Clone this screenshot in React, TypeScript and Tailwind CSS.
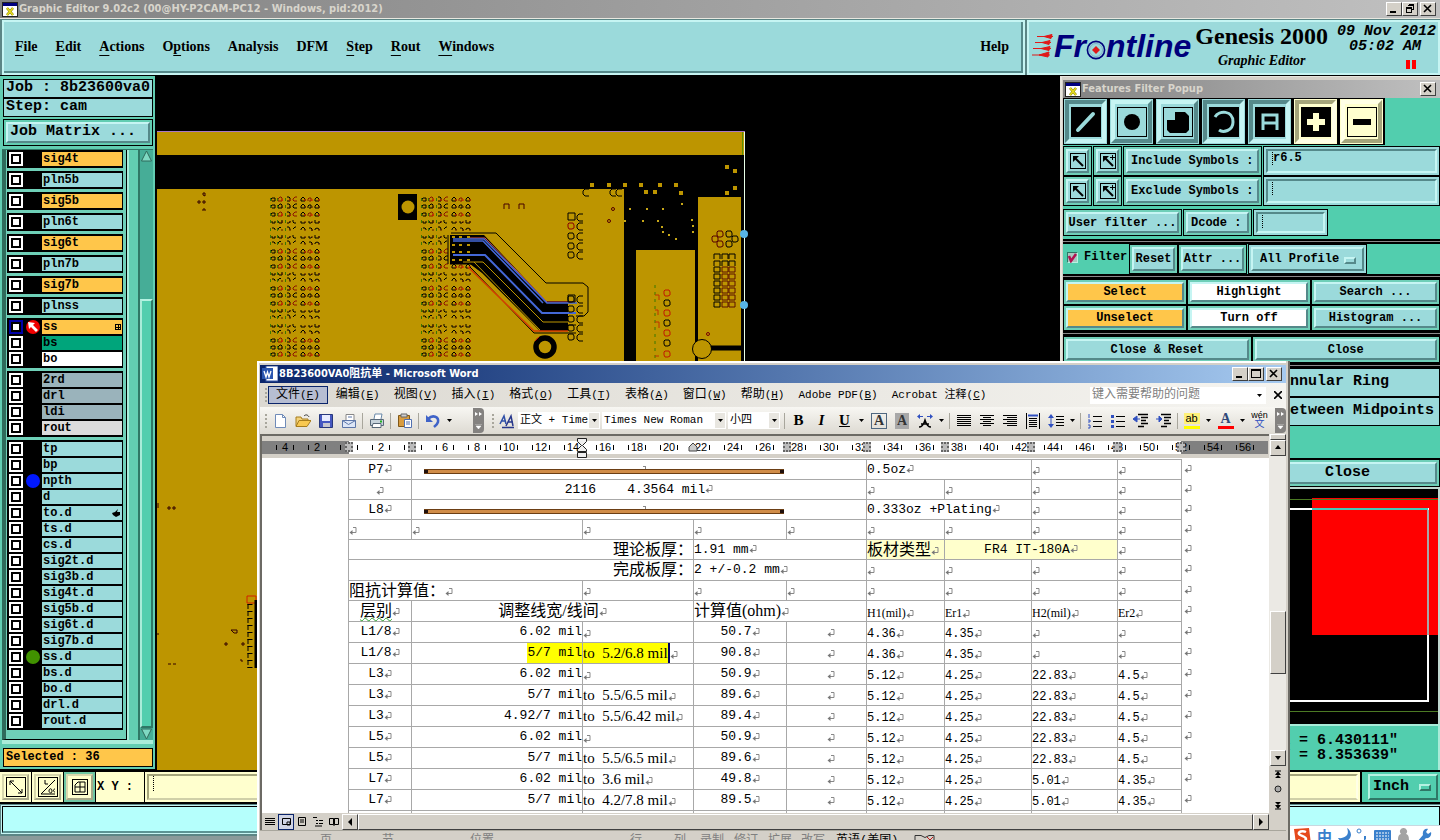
import { Fragment, type ReactNode } from "react";

const MONO = "font-['Liberation_Mono',monospace]";
const SERIF = "font-['Liberation_Serif',serif]";
const TITLE = "font-['DejaVu_Sans_Condensed','Noto_Sans','Noto_Sans_CJK_SC',sans-serif]";
const SONG = "font-['Liberation_Serif','Noto_Sans_CJK_SC',serif]";
const CJK = "font-['Liberation_Mono','Noto_Sans_CJK_SC',monospace]";

// Motif style bevels
const UP = "border-2 border-t-[#c6f5f3] border-l-[#c6f5f3] border-r-[#55898a] border-b-[#55898a]";
const DOWN = "border-2 border-t-[#55898a] border-l-[#55898a] border-r-[#c6f5f3] border-b-[#c6f5f3]";
const WIN_UP = "border border-t-white border-l-white border-r-[#404040] border-b-[#404040] bg-[#d4d0c8]";

function XIcon() {
  return (
    <svg viewBox="0 0 16 15" className="h-[15px] w-4 shrink-0">
      <rect width="16" height="15" fill="#222" />
      <rect x="1" y="1" width="14" height="13" fill="#fff" />
      <rect x="1" y="1" width="14" height="3" fill="#000080" />
      <path d="M5 6l6 7M11 6l-6 7" stroke="#8a8200" strokeWidth="2.6" />
      <path d="M5 6l6 7M11 6l-6 7" stroke="#e8de20" strokeWidth="1.4" />
    </svg>
  );
}

function WinButton({ kind }: { kind: "min" | "max" | "restore" | "close" }) {
  return (
    <button aria-label={kind} className={`${WIN_UP} grid h-[14px] w-4 place-items-center`}>
      <svg viewBox="0 0 12 10" className="h-[10px] w-3" fill="none" stroke="#000" shapeRendering="crispEdges">
        {kind === "min" && <path d="M2 8h6" strokeWidth="2" />}
        {kind === "max" && <path d="M1.5 .5h9v8h-9zM1.5 1.5h9" />}
        {kind === "restore" && <path d="M4.5 .5h5v5h-2M4 1.5h6M2.5 3.5h5v5h-5zM2 4.5h6" />}
        {kind === "close" && <path d="M2 1l7 7M9 1L2 8" strokeWidth="1.6" shapeRendering="auto" />}
      </svg>
    </button>
  );
}

/* ───────────── header ───────────── */

const menus: [string, string, string][] = [
  ["", "F", "ile"],
  ["", "E", "dit"],
  ["", "A", "ctions"],
  ["O", "p", "tions"],
  ["Analysis", "", ""],
  ["DFM", "", ""],
  ["", "S", "tep"],
  ["", "R", "out"],
  ["", "W", "indows"],
];

function Header() {
  return (
    <header>
      <div className="flex h-[18px] items-center bg-linear-to-r from-[#828282] to-[#c0c0c0] pr-1 pl-[2px]">
        <XIcon />
        <h1 className={`${TITLE} ml-px flex-1 text-[11px] font-bold text-[#d8d5cc]`}>
          Graphic Editor 9.02c2 (00@HY-P2CAM-PC12 - Windows, pid:2012)
        </h1>
        <WinButton kind="min" />
        <WinButton kind="restore" />
        <span className="w-[2px]" />
        <WinButton kind="close" />
      </div>
      <div className={`${SERIF} flex h-[58px] border-t border-b border-t-[#e8e8e0] border-b-black bg-[#5b8585]`}>
        <nav className="mt-px ml-[2px] flex min-w-0 flex-1 border-2 border-t-[#c6f5f3] border-r-[#c6f5f3] border-b-[#c6f5f3] border-l-[#c6f5f3] bg-[#9bdadb]">
          <div className="flex flex-1 items-center gap-[18px] border-r-2 border-b-2 border-[#55898a] pr-3 pl-[11px] text-[14px] font-bold text-black">
            {menus.map(([a, u, b]) => (
              <button key={a + u + b}>
                {a}
                <span className="underline underline-offset-4">{u}</span>
                {b}
              </button>
            ))}
            <button className="ml-auto">Help</button>
          </div>
        </nav>
        <div className="mt-px ml-[2px] flex w-[413px] border-2 border-[#c6f5f3] bg-[#9bdadb] pl-[3px]">
          <Logo />
          <div className="ml-1 flex flex-col items-center text-black">
            <span className="text-[24px] leading-[28px] font-bold">Genesis 2000</span>
            <span className="text-[14px] leading-[22px] font-bold italic">Graphic Editor</span>
          </div>
          <div className={`${MONO} ml-auto flex flex-col items-end pt-[2px] pr-[2px] text-[15px] leading-[15px] font-bold text-black italic`}>
            <span>09 Nov 2012</span>
            <span className="pr-[15px]">05:02 AM</span>
            <svg viewBox="0 0 10 9" className="mt-[6px] mr-5 h-[9px] w-[10px] shrink-0">
              <path d="M0 0h4v9H0zM6 0h4v9H6z" fill="#f00" />
            </svg>
          </div>
        </div>
      </div>
    </header>
  );
}

function Logo() {
  return (
    <div className="flex shrink-0 items-center pb-1 text-[#00007c]">
      <svg viewBox="0 0 22 26" className="h-[26px] w-[22px]" stroke="#e01818" fill="#e01818">
        <path d="M5 3.5h16M3 9.5h16M1 15.5h18M0 22h18" strokeWidth="1.2" />
        <path d="M12 3.5l8-2-1 4zM10 9.5l8-2-1 4zM9 15.5l9-2-1 4zM7 22l10-3-1 5z" />
      </svg>
      <span className="font-['Liberation_Sans',sans-serif] text-[32px] leading-8 font-bold italic">Fr</span>
      <svg viewBox="0 0 20 20" className="mt-2 h-5 w-5" fill="none">
        <circle cx="10" cy="10" r="8.6" stroke="#00007c" strokeWidth="1.6" />
        <circle cx="10" cy="10" r="6.5" stroke="#7fb0c8" />
        <path d="M10 6l4 4-4 4-4-4z" fill="#e01818" />
      </svg>
      <span className="font-['Liberation_Sans',sans-serif] text-[32px] leading-8 font-bold italic">ntline</span>
    </div>
  );
}

/* ───────────── layer list ───────────── */

type Layer = { name: string; color: string; mark?: "red" | "blue" | "green"; tail?: "grid" | "hand" };

const CYAN = "bg-[#9bdadb]";
const ORANGE = "bg-[#ffc64a]";
const STEEL = "bg-[#9ab3bb]";

const plain = (names: string): Layer[] => names.split(" ").map((name) => ({ name, color: CYAN }));

const groups: Layer[][] = [
  [{ name: "sig4t", color: ORANGE }],
  plain("pln5b"),
  [{ name: "sig5b", color: ORANGE }],
  plain("pln6t"),
  [{ name: "sig6t", color: ORANGE }],
  plain("pln7b"),
  [{ name: "sig7b", color: ORANGE }],
  plain("plnss"),
  [
    { name: "ss", color: ORANGE, mark: "red", tail: "grid" },
    { name: "bs", color: "bg-[#00a57b]" },
    { name: "bo", color: "bg-white" },
  ],
  [
    { name: "2rd", color: STEEL },
    { name: "drl", color: STEEL },
    { name: "ldi", color: STEEL },
    { name: "rout", color: "bg-[#dcdcdc]" },
  ],
  [
    ...plain("tp bp"),
    { name: "npth", color: CYAN, mark: "blue" },
    ...plain("d"),
    { name: "to.d", color: CYAN, tail: "hand" },
    ...plain("ts.d cs.d sig2t.d sig3b.d sig4t.d sig5b.d sig6t.d sig7b.d"),
    { name: "ss.d", color: CYAN, mark: "green" },
    ...plain("bs.d bo.d drl.d rout.d"),
  ],
];

function LayerRow({ layer }: { layer: Layer }) {
  const box = layer.mark === "red" ? "border-[#0000a8] bg-white" : "border-white bg-white";
  return (
    <label className="flex h-4 items-center gap-px pl-px text-black">
      <input type="checkbox" className={`${box} size-[14px] appearance-none border-2 outline-2 -outline-offset-4 outline-black`} />
      <span className="grid w-[17px] place-items-center">
        {layer.mark === "blue" && <span className="size-[14px] rounded-full bg-[#0018ff]" />}
        {layer.mark === "green" && <span className="size-[14px] rounded-full bg-[#419200]" />}
        {layer.mark === "red" && (
          <svg viewBox="0 0 14 14" className="size-[14px]">
            <circle cx="7" cy="7" r="7" fill="#f00000" />
            <path d="M2 2l7 1-2 2 5 5-2 2-5-5-2 2z" fill="#fff" />
          </svg>
        )}
      </span>
      <span className={`${layer.color} flex h-[14px] flex-1 items-center pl-px leading-[14px]`}>
        <span className="flex-1">{layer.name}</span>
        {layer.tail === "grid" && (
          <svg viewBox="0 0 6 6" className="mr-px size-[6px]" shapeRendering="crispEdges">
            <path d="M.5 .5h5v5h-5zM3 0v6M0 3h6" fill="none" stroke="#000" />
          </svg>
        )}
        {layer.tail === "hand" && (
          <svg viewBox="0 0 8 8" className="mr-[2px] size-2">
            <path d="M0 4l3-1 3-3-1 3h3v3L4 8 1 6z" />
          </svg>
        )}
      </span>
    </label>
  );
}

function Sidebar() {
  return (
    <aside className={`${MONO} flex w-[157px] shrink-0 flex-col border-r-2 border-b border-black bg-[#62cdb2] pt-[3px] pr-[2px] pl-[3px] font-bold text-black`}>
      <p className={`${CYAN} h-[19px] truncate border border-black pl-[2px] text-[15px] leading-[16px]`}>Job : 8b23600va0</p>
      <p className={`${CYAN} h-[19px] border border-black pl-[2px] text-[15px] leading-[16px]`}>Step: cam</p>
      <div className="mt-[2px] h-[27px] border border-black p-[2px]">
        <button className={`${UP} ${CYAN} flex h-full w-full items-center pl-[2px] text-[15px]`}>Job Matrix ...</button>
      </div>
      <div className="mt-[3px] -ml-px flex min-h-0 flex-1 border-t border-b-4 border-t-[#2f7766] border-b-[#a9ecd9]">
        <div className="flex w-[125px] flex-col gap-[3px] overflow-hidden border-r border-b border-l-4 border-r-black border-b-black border-l-[#2f6b5c] bg-[#6fd0b8] pr-[3px] pl-px text-[12px]">
          {groups.map((g) => (
            <div key={g[0].name} className="border border-black bg-black">
              {g.map((l) => (
                <LayerRow key={l.name} layer={l} />
              ))}
            </div>
          ))}
        </div>
        <div className="flex-1 border-r-2 border-l-2 border-r-[#2f7766] border-l-[#a9ecd9] bg-[#62cdb2]" />
        <div className="flex w-[13px] flex-col bg-[#46ad97]">
          <svg viewBox="0 0 13 12" className="h-3 w-[13px]">
            <path d="M6.5 1l5 10h-10z" fill="#7fd9c3" stroke="#2f6b5c" />
          </svg>
          <div className="h-[137px]" />
          <div className="flex-1 border-2 border-t-[#b5f2e2] border-r-[#2f7766] border-b-[#2f7766] border-l-[#a9ecd9] bg-[#52ceae]" />
          <svg viewBox="0 0 13 12" className="h-3 w-[13px]">
            <path d="M6.5 11l-5-10h10z" fill="#7fd9c3" stroke="#2f6b5c" />
          </svg>
        </div>
      </div>
      <p className={`${ORANGE} mt-1 mb-[2px] h-[19px] border border-black pl-[2px] text-[12px] leading-[17px]`}>Selected : 36</p>
    </aside>
  );
}

/* ───────────── board canvas ───────────── */

// f: whole pad, u: open at the top, n: open at the bottom
const padRows = "fffununfffunfffununfff";
const padShapes: Record<string, string[]> = {
  f: ["M-1 2h3v-3h-3l-1 1v2", "M-2 2v-2l2-2h1l1 1v3z", "M-1-2h2l1 1v3h-3", "M2-2h-2l-2 2v1l1 1h3", "M-2 2v-2l2-2 2 2v2z", "M-1 2h2v-3h-2l-1 1v2", "M-2 2v-2l2-2 2 2v2z"],
  u: ["M-1 0v2h3v-2", "M-2 0l1 2h3v-3", "M-1 2h2l1-1v-1", "M-2-1v2l1 1h2", "M-2 0v2h4v-1", "M-1 0v2h2l1-1", "M-2-1v3h4v-2"],
  n: ["M-1-1h2l1 1v1", "M-2 1v-1l2-2 1 1", "M-1-2h2l1 2v1", "M1-2h-1l-2 2", "M-2 1v-1l2-2 2 2v1", "M-1-1h2l1 1v2", "M-2 1v-1l2-1 2 1v1"],
};

function PadField({ x, y }: { x: number; y: number }) {
  return (
    <g fill="none">
      {padRows.split("").flatMap((kind, r) =>
        padShapes[kind].map((d, c) => {
          const red = kind === "f" && padRows[r - 1] + padRows[r + 1] !== "ff";
          return (
            <g key={`${r}-${c}`} transform={`translate(${x + Math.round(c * 7.4)} ${y + Math.round(r * 7.4)})`}>
              <path d={d} stroke={red && c % 2 ? "#8a1400" : "#000"} />
              {c < 3 && <path d="M-2.500-1v3" stroke="#3b7800" />}
              {c !== 3 && c !== 0 && <path d="M2 0v2" stroke={red ? "#e01000" : "#5a1800"} />}
            </g>
          );
        }),
      )}
    </g>
  );
}

function Ring({ x, y, color = "#000", gap = false }: { x: number; y: number; color?: string; gap?: boolean }) {
  return <path d={gap ? `M${x + 3} ${y - 3}h-4l-2 2v3l2 2h4` : `M${x - 2} ${y - 3}h4l1 2v3l-2 1h-3l-1-2v-3z`} fill="none" stroke={color} />;
}

const goldSpecks = [
  [590, 184], [607, 184], [623, 184], [639, 184], [658, 184], [674, 184], [644, 191], [653, 191], [679, 192],
  [725, 166], [733, 170], [733, 187], [725, 192],
];
const goldDots = [
  [630, 208], [647, 208], [663, 208], [682, 203], [625, 220], [643, 220], [658, 220], [662, 226],
  [663, 231], [669, 234], [676, 238], [692, 219], [693, 225], [693, 231],
];

function Board() {
  return (
    <div className="min-w-0 flex-1 overflow-hidden bg-black">
      <svg className="h-full w-full" role="img" aria-label="PCB layer view">
        <g transform="translate(-157 -76)">
          <path d="M157 132h587v23H157zM157 189h467v600H157zM636 250h59v540h-59zM698 197h43v590h-43z" fill="#bd9500" />
          <path d="M157 131.5h588" stroke="#a878c8" />
          <path d="M744.5 132v640" stroke="#e8ffe8" />
          <path d="M742.5 132v23" stroke="#5a9000" />
          {goldSpecks.map(([x, y]) => (
            <rect key={`${x}-${y}`} x={x} y={y - 1} width="4" height="4" fill="#bd9500" />
          ))}
          {goldDots.map(([x, y]) => (
            <rect key={`${x}-${y}`} x={x - 1} y={y} width="2" height="2" fill="#c8a818" />
          ))}

          <PadField x={273} y={199} />
          <PadField x={424} y={199} />

          <rect x="398" y="194" width="19" height="26" />
          <circle cx="408" cy="207" r="6.5" fill="#bd9500" />
          <path d="M504 209v-5h5v5M519 209v-5h5v5" fill="none" stroke="#400" />
          <path d="M568 213h7v7h-7z" fill="none" stroke="#000" />
          <Ring x={580} y={217} gap />
          {[226, 236, 246, 255].map((y, i) => (
            <Fragment key={y}>
              <Ring x={571} y={y} color={i ? "#000" : "#800"} />
              <Ring x={580} y={y} gap />
            </Fragment>
          ))}
          <Ring x={586} y={192} gap />
          <Ring x={613} y={192} gap />
          <Ring x={619} y={192} gap />
          <circle cx="613" cy="209" r="1.5" fill="none" stroke="#500" />
          <circle cx="609" cy="221" r="1.5" fill="none" stroke="#500" />

          {/* routed differential pairs */}
          <path d="M450 235h34l62 66h22v30h-28l-58-58-12-9h-20z" />
          <path d="M451 233h45l50 50h37l5 4v25l-4 4h-8" fill="none" stroke="#000" />
          <path d="M448 235v29M450 264h25l61 61h40" fill="none" stroke="#000" />
          <path d="M470 267l64 66h42" fill="none" stroke="#000" />
          <path d="M468 267l66 64h34" fill="none" stroke="#d43c00" strokeWidth="1.5" />
          <path d="M463 262h20l60 60h25M474 262l66 68" fill="none" stroke="#bd9500" />
          <path d="M470 238h15l62 64h28" fill="none" stroke="#d8504a" />
          <path d="M453 239h31l63 64h30M453 241h30l60 62" fill="none" stroke="#4468d8" strokeWidth="1.5" />
          <path d="M453 255h32l57 58h34" fill="none" stroke="#4468d8" strokeWidth="2" />
          {[236, 244, 251, 259].map((y) => (
            <path key={y} d={`M452 ${y}h3v2h-3zM459 ${y}h3v2h-3zM467 ${y}h3v2h-3z`} fill="#bd9500" />
          ))}
          <path d="M568 295h7v7h-7z" fill="none" stroke="#000" />
          {[299, 309, 319, 328, 337].map((y) => (
            <Fragment key={y}>
              <Ring x={571} y={y} />
              <Ring x={580} y={y} gap />
            </Fragment>
          ))}
          <circle cx="545" cy="347" r="9" fill="none" stroke="#000" strokeWidth="5.5" />
          <path d="M535 341l4-4" stroke="#c82000" />

          {/* connector on the right edge */}
          {[293, 303, 313, 323, 333, 343, 354].map((y, i) => (
            <Ring key={y} x={667} y={y} color={i % 2 ? "#000" : "#c01800"} />
          ))}
          <path d="M655 285v75" stroke="#3b7800" strokeDasharray="3 4" />
          <path d="M655 295h4v5M655 310h3v5M655 322h4v6M655 356h4" fill="none" stroke="#c03000" />
          {[234, 239, 244].map((y) => (
            <Fragment key={y}>
              <Ring x={y === 239 ? 715 : 720} y={y} color="#500" />
              <Ring x={y === 239 ? 735 : 729} y={y} />
            </Fragment>
          ))}
          {[256, 263, 270, 277, 284, 291, 298, 305].map((y, r) => (
            <Fragment key={y}>
              {[717, 725, 732].map((x) => (
                <path
                  key={x}
                  d={r < 2 ? `M${x - 3} ${y + 3}v-5h6v5` : `M${x - 3} ${y + 2}v-5h6v5z`}
                  fill="none"
                  stroke={r > 1 && x > 720 ? "#5a1000" : "#000"}
                />
              ))}
            </Fragment>
          ))}
          <path d="M702 348h39" stroke="#000" strokeWidth="5" />
          <circle cx="702" cy="349" r="9.5" fill="#bd9500" stroke="#000" />
          <circle cx="708" cy="334" r="1.5" fill="none" stroke="#700" />
          <circle cx="744" cy="234" r="4" fill="#58b4e4" />
          <circle cx="744" cy="305" r="4" fill="#58b4e4" />

          {/* strip left of the document window */}
          <g fill="none" stroke="#300">
            <path d="M203 195v-2h2v3zM198 203v-2h2v2zM203 203v-2h2v2zM203 211v-2h2v2" />
            <path d="M168 509v-2h2v2zM173 509v-2h2v2zM158 508v-5M168 664h3M173 664h3M158 633v2" />
            <path d="M231 630h6v3h-3zM225 645v-2h2v2zM242 645v-2h2v2zM240 660h2v2" />
            <path d="M247 596h9v7h-9z" stroke="#d02000" />
          </g>
          <path d="M256 600v68" stroke="#000" strokeWidth="3" />
          <path d="M250 604v64" stroke="#000" strokeWidth="5" strokeDasharray="1 6" />
          <path d="M248 604v64" stroke="#000" strokeDasharray="5 2" />
        </g>
      </svg>
    </div>
  );
}

/* ───────────── features filter popup ───────────── */

const CELL = "border border-black bg-[#6fcfb8] p-[2px]";

function PushButton({ children, face = CYAN, grow = "flex-1", pad = "justify-center" }: { children: ReactNode; face?: string; grow?: string; pad?: string }) {
  return (
    <div className={`${CELL} ${grow}`}>
      <button className={`${UP} ${face} ${pad} flex h-full w-full items-center whitespace-nowrap`}>{children}</button>
    </div>
  );
}

function ShapeButton({ name, pressed, cream, children }: { name: string; pressed?: boolean; cream?: boolean; children: ReactNode }) {
  const face = cream ? "bg-[#ffffce]" : "bg-[#9bdadb]";
  const bevel = cream
    ? pressed
      ? "border-t-[#a5a57b] border-l-[#a5a57b] border-r-[#ffffe6] border-b-[#ffffe6]"
      : "border-t-[#ffffe6] border-l-[#ffffe6] border-r-[#a5a57b] border-b-[#a5a57b]"
    : pressed
      ? "border-t-[#55898a] border-l-[#55898a] border-r-[#c6f5f3] border-b-[#c6f5f3]"
      : "border-t-[#c6f5f3] border-l-[#c6f5f3] border-r-[#55898a] border-b-[#55898a]";
  const ink = cream ? "text-[#ffffce]" : "text-[#9bdadb]";
  return (
    <div className={`${face} border border-r-2 border-black p-px`}>
      <button aria-label={name} aria-pressed={!!pressed} className={`${bevel} ${face} ${ink} grid h-[43px] w-[41px] place-items-center border-4`}>
        <svg viewBox="0 0 30 30" className="size-[30px]">
          {pressed ? <rect width="30" height="30" fill="#000" /> : <rect x=".5" y=".5" width="29" height="29" fill="none" stroke="#000" />}
          {children}
        </svg>
      </button>
    </div>
  );
}

function PickButton({ plus }: { plus?: boolean }) {
  return (
    <div className={`${CELL} w-[29px]`}>
      <button aria-label={plus ? "Add symbol" : "Pick symbol"} className={`${UP} ${CYAN} grid h-full w-full place-items-center`}>
        <svg viewBox="0 0 16 16" className="size-4" fill="none" stroke="#000">
          <rect x=".5" y=".5" width="15" height="15" />
          <path d="M5 5l8 8" strokeWidth="2" />
          <path d="M3 3h6L3 9z" fill="#000" stroke="none" />
          {plus && <path d="M12.5 2v5M10 4.500h5" />}
        </svg>
      </button>
    </div>
  );
}

function Field({ label, value, grow }: { label: string; value?: string; grow: string }) {
  return (
    <div className={`${grow} ${CYAN} border border-black p-[2px]`}>
      <div className={`${DOWN} flex h-full items-start pt-px pl-1`}>
        <span className="h-[13px] border-l border-dotted border-black" />
        <input aria-label={label} defaultValue={value} className="h-[13px] w-full min-w-0 bg-transparent leading-[13px] outline-none" />
      </div>
    </div>
  );
}

function Rule() {
  return <div className="h-[5px] border-y-2 border-black bg-[#8a8a8a]" />;
}

function FilterPopup() {
  return (
    <section className={`${MONO} border-t border-l-2 border-[#e6e4dc] bg-[#d4d0c8] pt-[3px] pl-px text-[12px] font-bold text-black`}>
      <div className="flex h-[18px] items-center bg-linear-to-r from-[#828282] to-[#c0c0c0] pr-1 pl-[2px]">
        <XIcon />
        <h2 className={`${TITLE} ml-px flex-1 text-[11px] text-[#d8d5cc]`}>Features Filter Popup</h2>
        <WinButton kind="close" />
      </div>
      <div className="bg-[#52ceae]">
        <div className="flex pb-px">
          <ShapeButton name="Lines" pressed>
            <path d="M7 23L22 7" stroke="currentColor" strokeWidth="4" strokeLinecap="round" />
          </ShapeButton>
          <ShapeButton name="Pads">
            <circle cx="15" cy="15" r="8" fill="#000" />
          </ShapeButton>
          <ShapeButton name="Surfaces">
            <path d="M12 5h10l4 4v14l-3 3H7l-3-3V13h8z" fill="#000" />
          </ShapeButton>
          <ShapeButton name="Arcs" pressed>
            <path d="M6 10c4-7 18-7 18 5 0 9-10 11-14 8" fill="none" stroke="currentColor" strokeWidth="3" />
          </ShapeButton>
          <ShapeButton name="Text" pressed>
            <path d="M8 23V8h14v15M8 16h14" fill="none" stroke="currentColor" strokeWidth="3" />
          </ShapeButton>
          <ShapeButton name="Positive" pressed cream>
            <path d="M15 6v18M6 15h18" stroke="currentColor" strokeWidth="6" />
          </ShapeButton>
          <ShapeButton name="Negative" cream>
            <path d="M6 15h18" stroke="#000" strokeWidth="6" />
          </ShapeButton>
        </div>
        {["Include", "Exclude"].map((kind) => (
          <div key={kind} className="flex h-[30px] gap-px">
            <PickButton />
            <PickButton plus />
            <PushButton grow="w-[139px]" pad="pl-[3px]">{kind} Symbols :</PushButton>
            <Field label={`${kind} symbols`} value={kind === "Include" ? "r6.5" : ""} grow="flex-1" />
          </div>
        ))}
        <div className="mt-[3px] mb-[3px] flex h-[27px] gap-px">
          <PushButton grow="w-[119px]">User filter ...</PushButton>
          <PushButton grow="w-[69px]" pad="pl-[3px]">Dcode :</PushButton>
          <Field label="Dcode" grow="w-[75px]" />
        </div>
        <Rule />
        <div className="flex h-[30px]">
          <label className="flex w-[66px] items-center gap-[6px] pb-1 pl-1">
            <span className="relative grid size-[11px] shrink-0">
              <input type="checkbox" defaultChecked className="peer size-[11px] appearance-none border border-t-[#2f7766] border-r-[#b5f2e2] border-b-[#b5f2e2] border-l-[#2f7766] bg-[#a8c8c0]" />
              <svg viewBox="0 0 11 11" className="pointer-events-none absolute inset-0">
                <path d="M2 4l2 5 5-7" fill="none" stroke="#b01050" strokeWidth="2.5" />
              </svg>
            </span>
            Filter
          </label>
          <PushButton grow="w-[49px]">Reset</PushButton>
          <PushButton grow="w-[69px]">Attr ...</PushButton>
          <div className={`${CYAN} ml-px w-[119px] border border-black p-[2px]`}>
            <div className={`${UP} relative h-full`}>
              <select aria-label="Profile" className="block h-full w-full appearance-none pl-[7px] outline-none">
                <option>All Profile</option>
              </select>
              <span className={`${UP} pointer-events-none absolute top-[8px] right-[6px] h-[7px] w-3`} />
            </div>
          </div>
        </div>
        <Rule />
        <div className="grid grid-cols-[124px_124px_1fr]">
          {[
            ["Select", ORANGE],
            ["Highlight", "bg-white"],
            ["Search ...", CYAN],
            ["Unselect", ORANGE],
            ["Turn off", "bg-white"],
            ["Histogram ...", CYAN],
          ].map(([text, face]) => (
            <div key={text} className="flex h-[26px]">
              <PushButton face={face}>{text}</PushButton>
            </div>
          ))}
        </div>
        <Rule />
        <div className="flex h-[27px]">
          <PushButton>Close &amp; Reset</PushButton>
          <PushButton>Close</PushButton>
        </div>
      </div>
    </section>
  );
}

function RightColumn() {
  return (
    <div className="flex w-[380px] shrink-0 flex-col">
      <FilterPopup />
      <section className={`${MONO} bg-[#52ceae] text-[15px] font-bold text-black`}>
        <div className="h-[5px] border-y-2 border-black bg-[#8a8a8a]" />
        <button className={`${CYAN} block h-[29px] w-full border border-black pl-[220px] text-left`}>Annular Ring</button>
        <button className={`${CYAN} block h-[29px] w-full border border-black pr-[5px] text-right`}>Between Midpoints</button>
        <div className="mt-8 flex h-[29px] border-t border-black">
          <div className={`${CELL} flex-1`} />
          <PushButton grow="w-[185px]">Close</PushButton>
        </div>
      </section>
      <div className="min-h-0 flex-1 border-t-2 border-r-2 border-[#c0d8d0] bg-black">
        <svg className="h-full w-full" role="img" aria-label="Job overview">
          <g transform="translate(-1060 -489)" fill="none">
            <path d="M1312 498h128v137h-128z" fill="#f00" />
            <path d="M1060 499.5h380M1060 711.5h380" stroke="#4c7a24" />
            <path d="M1290 509h138v192h-138" stroke="#fff" strokeWidth="2" />
            <path d="M1312 509h116" stroke="#48c8b8" strokeWidth="2" />
            <path d="M1428 510v125" stroke="#a8a8a8" strokeWidth="2" />
          </g>
        </svg>
      </div>
      <div className={`${MONO} h-[46px] border-t-2 border-r-2 border-[#a9ecd9] bg-[#52ceae] pt-[7px] pl-[221px] text-[15px] leading-[15px] font-bold text-black`}>
        <p className="whitespace-pre">X = 6.430111"</p>
        <p className="whitespace-pre">Y = 8.353639"</p>
      </div>
    </div>
  );
}

/* ───────────── bottom rows ───────────── */

function ToolCell({ name, teal, children }: { name: string; teal?: boolean; children: ReactNode }) {
  return (
    <div className={`${teal ? "bg-[#6fc6a4]" : "bg-[#ffffce]"} border-r border-black p-[2px]`}>
      <button aria-label={name} className="grid h-[26px] w-[27px] place-items-center border-2 border-t-[#d8d8ae] border-r-[#a8a888] border-b-[#a8a888] border-l-[#d8d8ae] bg-[#ffffce]">
        <svg viewBox="0 0 20 20" className="size-5" fill="none" stroke="#000">
          {children}
        </svg>
      </button>
    </div>
  );
}

function CoordinateBar() {
  return (
    <div className={`${MONO} flex h-[34px] border-y-2 border-black bg-[#ffffce] font-bold text-black`}>
      <ToolCell name="Measure">
        <rect x=".5" y=".5" width="19" height="19" />
        <path d="M4 4l12 12M4 8V4h4M16 12v4h-4" />
      </ToolCell>
      <ToolCell name="Angle">
        <rect x=".5" y=".5" width="19" height="19" />
        <path d="M3 17L17 3M3 17h14M7 3v4h3M11 14c0-3 3-3 3 0s-3 2-3 0M17 12c-2 0-2 3 0 3" />
      </ToolCell>
      <ToolCell name="Grid" teal>
        <rect x="2.5" y="2.5" width="15" height="15" />
        <path d="M5 15V8l3-3h7v10zM10 5v10M5 10h10" />
      </ToolCell>
      <label htmlFor="xy" className="flex w-12 items-center pl-px text-[12px] whitespace-pre">
        X Y :
      </label>
      <div className="flex min-w-0 flex-1 border-l border-black p-[2px]">
        <div className="flex w-full items-start border-2 border-t-[#a5a57b] border-r-[#ffffe6] border-b-[#d0d0a8] border-l-[#a5a57b] pl-1">
          <span className="h-[15px] border-l border-dotted border-black" />
          <input id="xy" className="w-full bg-transparent outline-none" />
        </div>
      </div>
      <div className="w-[80px] border-l-2 border-black bg-[#52ceae] p-[2px] pl-[6px]">
        <div className="relative h-full border-2 border-t-[#b5f2e2] border-r-[#2f7766] border-b-[#2f7766] border-l-[#b5f2e2]">
          <select aria-label="Units" className="block h-full w-full appearance-none pl-[3px] text-[15px] outline-none">
            <option>Inch</option>
          </select>
          <span className="pointer-events-none absolute top-[8px] right-[5px] h-[7px] w-3 border-2 border-t-[#b5f2e2] border-r-[#2f7766] border-b-[#2f7766] border-l-[#b5f2e2]" />
        </div>
      </div>
    </div>
  );
}

function ImeBar() {
  return (
    <div className="absolute right-0 bottom-0 flex h-[15px] w-[150px] items-start gap-[6px] overflow-hidden border-t border-[#c8d8e0] bg-white pt-px pl-[3px] text-[#3a80cc]">
      <svg viewBox="0 0 18 18" className="size-[18px] shrink-0">
        <path d="M1 2l15-1 2 16H3z" fill="#e64a1c" />
        <path d="M13 5c-4-2-8 0-7 2s7 2 7 5-5 3-8 1" fill="none" stroke="#fff" strokeWidth="2.5" />
      </svg>
      <span className="font-['Noto_Sans_CJK_SC',sans-serif] text-[15px] leading-[17px] font-bold">中</span>
      <svg viewBox="0 0 104 16" className="h-4 w-[104px] shrink-0" fill="currentColor">
        <path d="M9 1c3 7-2 11-9 10 2 5 12 5 13-3 0-3-2-6-4-7z" />
        <circle cx="21" cy="4" r="2" fill="none" stroke="currentColor" />
        <path d="M26 9h2v3l-2 2z" />
        <rect x="36" y="3" width="17" height="12" rx="1" />
        <path d="M38 6h13M38 9h13M38 12h13" stroke="#fff" strokeDasharray="2 1" />
        <path d="M65 1a3.5 3.5 0 013 6c3 1 3 3 3 9H60c0-6 0-8 3-9a3.5 3.5 0 012-6z" fill="#a4a4a4" />
        <path d="M79 15l6-7c-1-4 2-7 5-6l-2 3 2 2 3-2c1 4-2 7-5 6l-6 7z" />
      </svg>
    </div>
  );
}

/* ───────────── Word window ───────────── */

const wordMenus: [string, string][] = [
  ["文件", "F"], ["编辑", "E"], ["视图", "V"], ["插入", "I"], ["格式", "O"], ["工具", "T"],
  ["表格", "A"], ["窗口", "W"], ["帮助", "H"], ["Adobe PDF", "B"], ["Acrobat 注释", "C"],
];

function Handle() {
  return <span className="h-[14px] w-[3px] border-l-2 border-dotted border-[#a8a69c]" />;
}

function Caret() {
  return (
    <svg viewBox="0 0 5 3" className="h-[3px] w-[5px] shrink-0">
      <path d="M0 0h5L2.5 3z" />
    </svg>
  );
}

function Divider() {
  return <span className="mx-[2px] h-4 w-px bg-[#a8a69c]" />;
}

function Tool({ name, children }: { name: string; children: ReactNode }) {
  return (
    <button aria-label={name} className="flex h-5 w-[23px] shrink-0 items-center justify-center">
      <svg viewBox="0 0 16 16" className="size-4" fill="none" stroke="#000">
        {children}
      </svg>
    </button>
  );
}

function Combo({ label, value, width }: { label: string; value: string; width: string }) {
  return (
    <div className={`${width} relative mr-[2px] h-[17px] shrink-0`}>
      <select aria-label={label} className={`${CJK} block h-full w-full appearance-none overflow-hidden bg-white pr-3 pl-[2px] text-[11px] leading-[17px] outline-none`}>
        <option>{value}</option>
      </select>
      <span className="pointer-events-none absolute top-px right-px grid h-[15px] w-[10px] place-items-center bg-[#e8e6e0]">
        <Caret />
      </span>
    </div>
  );
}

function More() {
  return (
    <span className="flex h-[25px] w-[11px] shrink-0 flex-col items-center justify-between rounded-r-sm bg-[#848280] py-1">
      <svg viewBox="0 0 7 4" className="h-1 w-[7px]">
        <path d="M0 0l3 2-3 2zM4 0l3 2-3 2z" fill="#fff" />
      </svg>
      <svg viewBox="0 0 7 5" className="h-[5px] w-[7px]">
        <path d="M0 0h7M1 2h5L3.5 5z" fill="#fff" stroke="#fff" strokeWidth=".5" />
      </svg>
    </span>
  );
}

const LINES = "M1 2.5h14M1 4.5h14M1 6.5h14M1 8.5h14M1 10.5h14M1 12.5h14";

function Toolbars() {
  return (
    <div className="flex h-[27px] shrink-0 items-center bg-linear-to-b from-[#f8f7f3] to-[#dddad2] pl-[5px] text-black">
      <Handle />
      <Tool name="New">
        <path d="M3.5 1.5h7l3 3v10h-10z" fill="#fff" stroke="#6f8bb8" />
        <path d="M10.5 1.5v3h3" stroke="#6f8bb8" />
      </Tool>
      <Tool name="Open">
        <path d="M1 13V4h5l1 2h6v3" fill="#f3d27a" stroke="#a67c1c" />
        <path d="M1 13.5l3-6h12l-4 6z" fill="#f8c850" stroke="#a67c1c" />
        <path d="M9 3c2-2 4-1 5 1" stroke="#333" />
      </Tool>
      <Tool name="Save">
        <path d="M1.5 1.5h13v13h-13z" fill="#4658c0" stroke="#28387c" />
        <path d="M4 2h8v6H4z" fill="#e8ecff" stroke="none" />
        <path d="M5 10h7v4H5z" fill="#c8c8d0" stroke="none" />
      </Tool>
      <Tool name="Mail">
        <path d="M5 1.5h8v8H5z" fill="#fff" stroke="#888" />
        <path d="M1.5 7.5h13v7h-13z" fill="#dde6f6" stroke="#5c76a8" />
        <path d="M1.5 7.5l6 4 7-4M7 4h4" stroke="#5c76a8" />
      </Tool>
      <Divider />
      <Tool name="Print">
        <path d="M5 6l1-5h7l-1 5" fill="#fff" stroke="#6888a8" />
        <path d="M1.5 6.5h13v6h-13z" fill="#c8d4dc" stroke="#586878" />
        <path d="M4 10.5h8v4H3z" fill="#fff" stroke="#586878" />
        <path d="M11 8.500h2" stroke="#20b020" strokeWidth="2" />
      </Tool>
      <Divider />
      <Tool name="Paste">
        <path d="M1.5 2.5h11v11h-11z" fill="#d89c40" stroke="#805818" />
        <path d="M4 1h6v3H4z" fill="#d0d0d0" stroke="#666" />
        <path d="M7.5 6.5h7v8h-7z" fill="#fff" stroke="#5070b0" />
        <path d="M9 9h4M9 11h4" stroke="#5070b0" />
      </Tool>
      <Divider />
      <Tool name="Undo">
        <path d="M3 6c5-5 11-2 10 3-1 3-3 4-4 5" stroke="#3f63c8" strokeWidth="2.5" />
        <path d="M1 2v7h7z" fill="#3f63c8" stroke="none" />
      </Tool>
      <span className="px-[3px]"><Caret /></span>
      <span className="w-[18px]" />
      <More />
      <span className="w-2" />
      <Handle />
      <Tool name="Styles">
        <path d="M1 11L5 3l2 8M3 8h4" stroke="#3050a8" strokeWidth="1.5" />
        <path d="M7 13l5-10 2 10M9 9h5M3 14.5h12" stroke="#28388c" strokeWidth="1.5" />
      </Tool>
      <Combo label="Style" value="正文 + Time" width="w-[82px]" />
      <Combo label="Font" value="Times New Roman" width="w-[124px]" />
      <Combo label="Size" value="小四" width="w-[52px]" />
      <Divider />
      <button className={`${SERIF} w-[23px] shrink-0 text-[15px] font-bold`}>B</button>
      <button className={`${SERIF} w-[23px] shrink-0 text-[15px] font-bold italic`}>I</button>
      <button className={`${SERIF} w-[23px] shrink-0 text-[15px] font-bold underline`}>U</button>
      <span className="px-[3px]"><Caret /></span>
      <button aria-label="Border" className={`${SERIF} mx-1 h-4 w-4 shrink-0 border border-[#506880] text-[14px] leading-[14px] font-bold text-[#333]`}>A</button>
      <button aria-label="Shading" className={`${SERIF} mx-1 h-4 w-[14px] shrink-0 bg-[#a8a8a8] text-[14px] leading-4 font-bold text-[#333]`}>A</button>
      <Tool name="Scale">
        <path d="M2 14c4 0 5-4 6-7 1 3 2 7 6 7M4 11h8" strokeWidth="1.5" />
        <path d="M1 3.500h5M10 3.500h5" stroke="#3050c0" />
        <path d="M3 1L0 3.500 3 6zM13 1l3 2.500L13 6z" fill="#3050c0" stroke="none" />
      </Tool>
      <span className="px-[3px]"><Caret /></span>
      <Divider />
      <Tool name="Justify"><path d={LINES} /></Tool>
      <Tool name="Center"><path d="M1 2.5h14M4 4.5h8M1 6.5h14M4 8.5h8M1 10.5h14M4 12.5h8" /></Tool>
      <Tool name="Right"><path d="M1 2.5h14M5 4.5h10M1 6.5h14M5 8.5h10M1 10.5h14M5 12.5h10" /></Tool>
      <Tool name="Distribute">
        <path d="M1.5 0v16M14.5 0v16" />
        <path d="M3 2.5h10" stroke="#3050c0" strokeWidth="2" />
        <path d="M4 5.5h8M4 7.5h8M4 9.5h8M4 11.5h8M4 13.5h8" />
      </Tool>
      <Tool name="Line spacing">
        <path d="M3 3v10" stroke="#3050c0" />
        <path d="M0 5l3-4 3 4zM0 11l3 4 3-4z" fill="#3050c0" stroke="none" />
        <path d="M8 3.5h8M8 6.5h8M8 9.5h8M8 12.5h8" />
      </Tool>
      <span className="px-[3px]"><Caret /></span>
      <Divider />
      <Tool name="Numbering">
        <path d="M2 1v4M1 7h2v2H1M1 12h2v3H1" stroke="#3050c0" />
        <path d="M6 3.5h9M6 8.5h9M6 13.5h9" />
      </Tool>
      <Tool name="Bullets">
        <path d="M1 2h3v3H1zM1 7h3v3H1zM1 12h3v3H1z" fill="#3050c0" stroke="none" />
        <path d="M6 3.5h9M6 8.5h9M6 13.5h9" />
      </Tool>
      <Tool name="Outdent">
        <path d="M5 1.5h10M8 4.5h7M8 7.5h5M8 10.5h7M5 13.5h6" strokeWidth="1.5" />
        <path d="M0 6l4-3v6zM4 6h3" fill="#3050c0" stroke="#3050c0" />
      </Tool>
      <Tool name="Indent">
        <path d="M5 1.5h10M8 4.5h7M8 7.5h5M8 10.5h7M5 13.5h6" strokeWidth="1.5" />
        <path d="M6 6L3 3v6zM0 6h3" fill="#3050c0" stroke="#3050c0" />
      </Tool>
      <Divider />
      <button aria-label="Highlight" className="flex w-[23px] shrink-0 flex-col items-center font-['Liberation_Sans',sans-serif] text-[11px] leading-[11px]">
        <span className="w-4 bg-[#fff27a]">ab</span>
        <span className="mt-[2px] h-[3px] w-4 bg-[#ffff00]" />
      </button>
      <span className="px-[3px]"><Caret /></span>
      <button aria-label="Font color" className={`${SERIF} flex w-[23px] shrink-0 flex-col items-center text-[14px] leading-3 font-bold text-[#304878]`}>
        A
        <span className="mt-px h-[3px] w-4 bg-[#f00]" />
      </button>
      <span className="px-[3px]"><Caret /></span>
      <button aria-label="Phonetic guide" className="flex w-[23px] shrink-0 flex-col items-center font-['Liberation_Sans','Noto_Sans_CJK_SC',sans-serif] text-[9px] leading-[7px]">
        wén
        <span className="text-[10px] leading-[10px] text-[#3050c0]">文</span>
      </button>
      <span className="flex-1" />
      <More />
    </div>
  );
}

const rulerStops = ["left-[83px]", "left-[146px]", "left-[521px]", "left-[601px]", "left-[679px]", "left-[765px]", "left-[851px]", "left-[915px]"];

function Ruler() {
  return (
    <div className="flex h-6 shrink-0 border-t-2 border-l-2 border-[#6c6a64] bg-[#d4d0c8]">
      <div className="relative min-w-0 flex-1 overflow-hidden">
        <div className="mt-[5px] flex h-[13px] w-[1006px] bg-linear-to-r from-[#808080] from-[87px] via-white via-[87px] to-white">
          <div className="flex w-full bg-linear-to-r from-transparent from-[919px] to-[#808080] to-[919px] pl-[7px] font-['Liberation_Sans',sans-serif] text-[11px] leading-[13px] text-black">
            {Array.from({ length: 31 }, (_, i) => Math.abs(i * 2 - 4)).map((n, i) => (
              <span key={i} className="flex w-8 shrink-0 items-center justify-between px-[7px]">
                <i className="h-[5px] w-px bg-black" />
                {i === 2 || i === 4 ? "" : n}
                <i className="h-[5px] w-px bg-black" />
              </span>
            ))}
          </div>
        </div>
        {rulerStops.map((stop) => (
          <span key={stop} className={`${stop} absolute top-[6px] h-[10px] w-2 border-2 border-dotted border-[#666] bg-[#bbb]`} />
        ))}
        <svg viewBox="0 0 10 20" className="absolute top-[2px] left-[315px] h-5 w-[10px]" fill="#eee" stroke="#222">
          <path d="M.5 .5h9v3l-4 4 4 4v2h-9v-2l4-4-4-4zM.5 14.5h9v5h-9z" />
        </svg>
        <svg viewBox="0 0 10 10" className="absolute top-[6px] left-[426px] h-[10px] w-[10px]" fill="#ccc" stroke="#444">
          <path d="M5 1l4 4v4H1V5z" />
        </svg>
      </div>
    </div>
  );
}

function Ret() {
  return (
    <svg viewBox="0 0 8 8" className="inline-block size-2 shrink-0 align-middle" fill="none" stroke="#888">
      <path d="M4 .5h3v5H3" />
      <path d="M3.5 3v5L.5 5.5z" fill="#777" stroke="none" />
    </svg>
  );
}

const TD = "border border-[#a8a8a8] p-0 leading-4 whitespace-nowrap";
const M13 = `${MONO} text-[13px]`;
const M12 = `${MONO} text-[12px]`;

function Cell({ children, span, className = "" }: { children?: ReactNode; span?: number; className?: string }) {
  return (
    <td colSpan={span} className={`${TD} ${className}`}>
      {children}
      <Ret />
    </td>
  );
}

function RowEnd() {
  return (
    <td className="p-0 pb-1 pl-[2px] leading-none">
      <Ret />
    </td>
  );
}

function CopperCell() {
  return (
    <td colSpan={4} className={TD}>
      <div className="flex w-[372px] flex-col items-center pt-px pl-3">
        <span className="ml-20 h-[3px] w-[3px] border-t border-r border-[#888]" />
        <span className="flex h-[5px] w-full border-y border-[#6b3e14] bg-[#d08c48]">
          <span className="w-1 bg-[#20100c]" />
          <span className="ml-auto w-1 bg-[#20100c]" />
        </span>
      </div>
    </td>
  );
}

const impedance = [
  ["L1/8", "6.02 mil", "", "50.7", "4.36", "4.35", "", ""],
  ["L1/8", "5/7 mil", "to  5.2/6.8 mil", "90.8", "4.36", "4.35", "", ""],
  ["L3", "6.02 mil", "", "50.9", "5.12", "4.25", "22.83", "4.5"],
  ["L3", "5/7 mil", "to  5.5/6.5 mil", "89.6", "5.12", "4.25", "22.83", "4.5"],
  ["L3", "4.92/7 mil", "to  5.5/6.42 mil", "89.4", "5.12", "4.25", "22.83", "4.5"],
  ["L5", "6.02 mil", "", "50.9", "5.12", "4.25", "22.83", "4.5"],
  ["L5", "5/7 mil", "to  5.5/6.5 mil", "89.6", "5.12", "4.25", "22.83", "4.5"],
  ["L7", "6.02 mil", "to  3.6 mil", "49.8", "5.12", "4.25", "5.01", "4.35"],
  ["L7", "5/7 mil", "to  4.2/7.8 mil", "89.5", "5.12", "4.25", "5.01", "4.35"],
];

function StackTable() {
  const blanks = (n: number) => Array.from({ length: n }, (_, i) => <Cell key={i} />);
  return (
    <table className={`${SONG} mt-px ml-[86px] w-[853px] table-fixed border-collapse text-[16px] text-black`}>
      <colgroup>
        <col className="w-[63px]" />
        <col className="w-[171px]" />
        <col className="w-[111px]" />
        <col className="w-[93px]" />
        <col className="w-[80px]" />
        <col className="w-[78px]" />
        <col className="w-[87px]" />
        <col className="w-[86px]" />
        <col className="w-[64px]" />
        <col className="w-[20px]" />
      </colgroup>
      <tbody>
        <tr className="h-5">
          <Cell className={`${M13} text-center`}>P7</Cell>
          <CopperCell />
          <Cell span={2} className={M13}>0.5oz</Cell>
          {blanks(2)}
          <RowEnd />
        </tr>
        <tr className="h-5">
          <Cell className="text-center" />
          <Cell span={4} className={`${M13} text-center`}>
            <span className="whitespace-pre">2116    4.3564 mil</span>
          </Cell>
          {blanks(4)}
          <RowEnd />
        </tr>
        <tr className="h-5">
          <Cell className={`${M13} text-center`}>L8</Cell>
          <CopperCell />
          <Cell span={2} className={M13}>0.333oz +Plating</Cell>
          {blanks(2)}
          <RowEnd />
        </tr>
        <tr className="h-5">
          {blanks(9)}
          <RowEnd />
        </tr>
        <tr className="h-5">
          <td colSpan={3} className={`${TD} text-right`}>理论板厚：</td>
          <Cell span={2} className={M13}>1.91 mm</Cell>
          <Cell className="bg-[#ffffcc]">板材类型</Cell>
          <Cell span={2} className={`${M13} bg-[#ffffcc] text-center`}>FR4 IT-180A</Cell>
          <Cell />
          <RowEnd />
        </tr>
        <tr className="h-[21px]">
          <td colSpan={3} className={`${TD} text-right`}>完成板厚：</td>
          <Cell span={2} className={M13}>2 +/-0.2 mm</Cell>
          {blanks(4)}
          <RowEnd />
        </tr>
        <tr className="h-5">
          <Cell span={2}>阻抗计算值：</Cell>
          {blanks(7)}
          <RowEnd />
        </tr>
        <tr className="h-[21px]">
          <Cell className="text-center">
            <span className="underline decoration-[#30a030] decoration-wavy decoration-1">层别</span>
          </Cell>
          <Cell span={2} className="text-center">调整线宽/线间</Cell>
          <Cell span={2}>计算值(ohm)</Cell>
          <Cell className="align-bottom text-[12px]">H1(mil)</Cell>
          <Cell className="align-bottom text-[12px]">Er1</Cell>
          <Cell className="align-bottom text-[12px]">H2(mil)</Cell>
          <Cell className="align-bottom text-[12px]">Er2</Cell>
          <RowEnd />
        </tr>
        {impedance.map(([layer, width, adjusted, ohm, ...rest], i) => {
          const marked = i === 1;
          return (
            <tr key={i} className="h-[21px]">
              <Cell className={`${M13} text-center`}>{layer}</Cell>
              <td className={`${TD} ${M13} text-right`}>
                <span className={marked ? "inline-block bg-[#ffff00] leading-5" : ""}>{width}</span>
              </td>
              <Cell className="text-[15px]">
                <span className={marked ? "inline-block border-r-2 border-[#000060] bg-[#ffff00] leading-5 whitespace-pre" : "whitespace-pre"}>{adjusted}</span>
              </Cell>
              <Cell className={`${M13} text-center`}>{ohm}</Cell>
              <Cell className="pl-2 text-center" />
              {rest.map((v, k) => (
                <Cell key={k} className={`${M12} align-bottom`}>{v}</Cell>
              ))}
              <RowEnd />
            </tr>
          );
        })}
        <tr className="h-5">
          {blanks(9)}
          <RowEnd />
        </tr>
      </tbody>
    </table>
  );
}

function Arrow({ dir }: { dir: "up" | "down" | "left" | "right" }) {
  const d = { up: "M1 5l3-4 3 4z", down: "M1 2h6L4 6z", left: "M6 0v8L2 4z", right: "M2 0v8l4-4z" }[dir];
  return (
    <button aria-label={`Scroll ${dir}`} className={`${WIN_UP} grid size-4 shrink-0 place-items-center`}>
      <svg viewBox="0 0 8 8" className="size-2">
        <path d={d} />
      </svg>
    </button>
  );
}

function VScroll() {
  return (
    <div className="flex w-[17px] shrink-0 flex-col items-center bg-[#ebe9e4]">
      <span className={`${WIN_UP} h-[6px] w-4`} />
      <Arrow dir="up" />
      <div className="h-[155px]" />
      <div className={`${WIN_UP} h-[63px] w-4`} />
      <div className="flex-1" />
      <Arrow dir="down" />
      <div className="grid h-[47px] w-full place-items-center bg-[#d4d0c8]">
        <svg viewBox="0 0 10 42" className="h-[42px] w-[10px]">
          <path d="M2 6l3-4 3 4zM2 9l3-3 3 3zM2 33l3 3 3-3zM2 36l3 4 3-4z" />
          <path d="M2 2h6M2 40h6" stroke="#000" />
          <circle cx="5" cy="20" r="3" fill="#aaa" stroke="#222" />
        </svg>
      </div>
    </div>
  );
}

const views = [
  "M1 2.5h10M1 4.5h10M1 6.5h10M1 8.5h10",
  "M2.5 2.5h8v6h-8zM7 6h3v3H7z",
  "M2.5 1.5h7v8h-7zM4 4h4M4 6h4",
  "M1 1.5h4M4 4.5h2M7 4.5h4M4 7.5h2M7 7.5h4M3 10h7",
  "M1.5 2.5h4v6h-4zM6.5 2.5h4v6h-4zM6 2v8",
];

const statusItems = [
  ["页", "w-[62px]"], ["节", "w-[88px]"], ["位置", "w-[160px]"], ["行", "w-[44px]"], ["列", "w-[26px]"],
  ["录制", "w-[34px]"], ["修订", "w-[34px]"], ["扩展", "w-[33px]"], ["改写", "w-[35px]"],
];

function WordWindow() {
  return (
    <section className="absolute top-[361px] right-[150px] bottom-0 left-[257px] flex flex-col border-r-2 border-r-[#6c6a64] bg-[#d4d0c8] pr-[2px]">
      <div className="flex min-h-0 flex-1 flex-col border-t-2 border-l-2 border-white pt-[2px] pl-px">
        <div className="flex h-[18px] shrink-0 items-center bg-linear-to-r from-[#0a246a] to-[#a6caf0] pr-1 pl-[2px]">
          <svg viewBox="0 0 16 16" className="size-4">
            <rect x="4" width="12" height="15" fill="#fff" stroke="#3858a8" />
            <rect y="2" width="11" height="11" fill="#2b56b0" />
            <path d="M2 5l2 6 1.5-5L7 11l2-6" fill="none" stroke="#fff" strokeWidth="1.3" />
          </svg>
          <h2 className={`${TITLE} ml-px flex-1 text-[11px] font-bold text-white`}>8B23600VA0阻抗单 - Microsoft Word</h2>
          <WinButton kind="min" />
          <WinButton kind="max" />
          <span className="w-[2px]" />
          <WinButton kind="close" />
        </div>
        <div className={`${CJK} flex h-6 shrink-0 items-center bg-linear-to-r from-[#dcd9d2] to-[#f5f4f0] pl-[5px] text-[12px] text-black`}>
          <Handle />
          {wordMenus.map(([text, key], i) => (
            <button
              key={key}
              className={`flex h-[18px] items-center whitespace-nowrap ${i === 0 ? "mr-px border border-[#0a246a] bg-[#b6bdd2] px-[7px]" : "border border-transparent px-[6px]"}`}
            >
              <span className={i > 8 ? "text-[11px]" : "w-6"}>{text}</span>
              <span className="text-[11px]">
                (<u>{key}</u>)
              </span>
            </button>
          ))}
          <span className="ml-auto flex h-[17px] w-[176px] items-center bg-white">
            <input
              aria-label="Help question"
              placeholder="键入需要帮助的问题"
              className="w-full min-w-0 bg-transparent pl-[2px] outline-none placeholder:text-[#808080]"
            />
            <span className="px-1"><Caret /></span>
          </span>
          <button aria-label="Close document" className="mr-1 ml-2">
            <svg viewBox="0 0 8 8" className="size-2" stroke="#000" strokeWidth="1.6">
              <path d="M0 0l8 8M8 0L0 8" />
            </svg>
          </button>
        </div>
        <Toolbars />
        <div className="flex min-h-0 flex-1">
          <div className="flex min-w-0 flex-1 flex-col">
            <Ruler />
            <div className="min-h-0 flex-1 overflow-hidden border-l-2 border-[#6c6a64] bg-white">
              <StackTable />
            </div>
          </div>
          <VScroll />
        </div>
        <div className="flex h-[17px] shrink-0 items-center border-l-2 border-[#6c6a64] pr-[17px]">
          {views.map((d, i) => (
            <button key={d} aria-label={`View ${i + 1}`} className={`grid size-4 place-items-center ${i === 1 ? "border border-[#0a246a] bg-[#d0d4e4]" : ""}`}>
              <svg viewBox="0 0 12 11" className="h-[11px] w-3" fill="none" stroke="#000">
                <path d={d} />
              </svg>
            </button>
          ))}
          <Arrow dir="left" />
          <div className={`${WIN_UP} h-4 flex-1`} />
          <Arrow dir="right" />
        </div>
        <div className={`${CJK} flex h-[10px] shrink-0 overflow-hidden border-t border-[#a8a69c] pt-[2px] pl-[60px] text-[12px] leading-4 text-[#808080]`}>
          {statusItems.map(([text, w]) => (
            <span key={text} className={`${w} shrink-0`}>{text}</span>
          ))}
          <span className="text-black">英语(美国)</span>
          <svg viewBox="0 0 22 14" className="ml-4 h-[14px] w-[22px]" fill="none" stroke="#333">
            <path d="M1 2.5h6l4 2 4-2h5v10H1z" />
            <path d="M13 4l6 6M19 4l-6 6" stroke="#c01818" />
          </svg>
        </div>
      </div>
    </section>
  );
}

export default function App() {
  return (
    <main className="relative flex h-screen flex-col overflow-hidden bg-[#5b8585]">
      <Header />
      <div className="flex min-h-0 flex-1">
        <Sidebar />
        <Board />
        <RightColumn />
      </div>
      <CoordinateBar />
      <div className="h-9 shrink-0 border-b-4 border-[#8a9a9a] bg-[#5b8585] pt-[2px] pl-[2px]">
        <div className="h-[27px] border border-b-2 border-black border-b-[#5b9494] bg-[#b5fffc] outline-1 outline-[#c6f5f3]" />
      </div>
      <ImeBar />
      <WordWindow />
    </main>
  );
}
